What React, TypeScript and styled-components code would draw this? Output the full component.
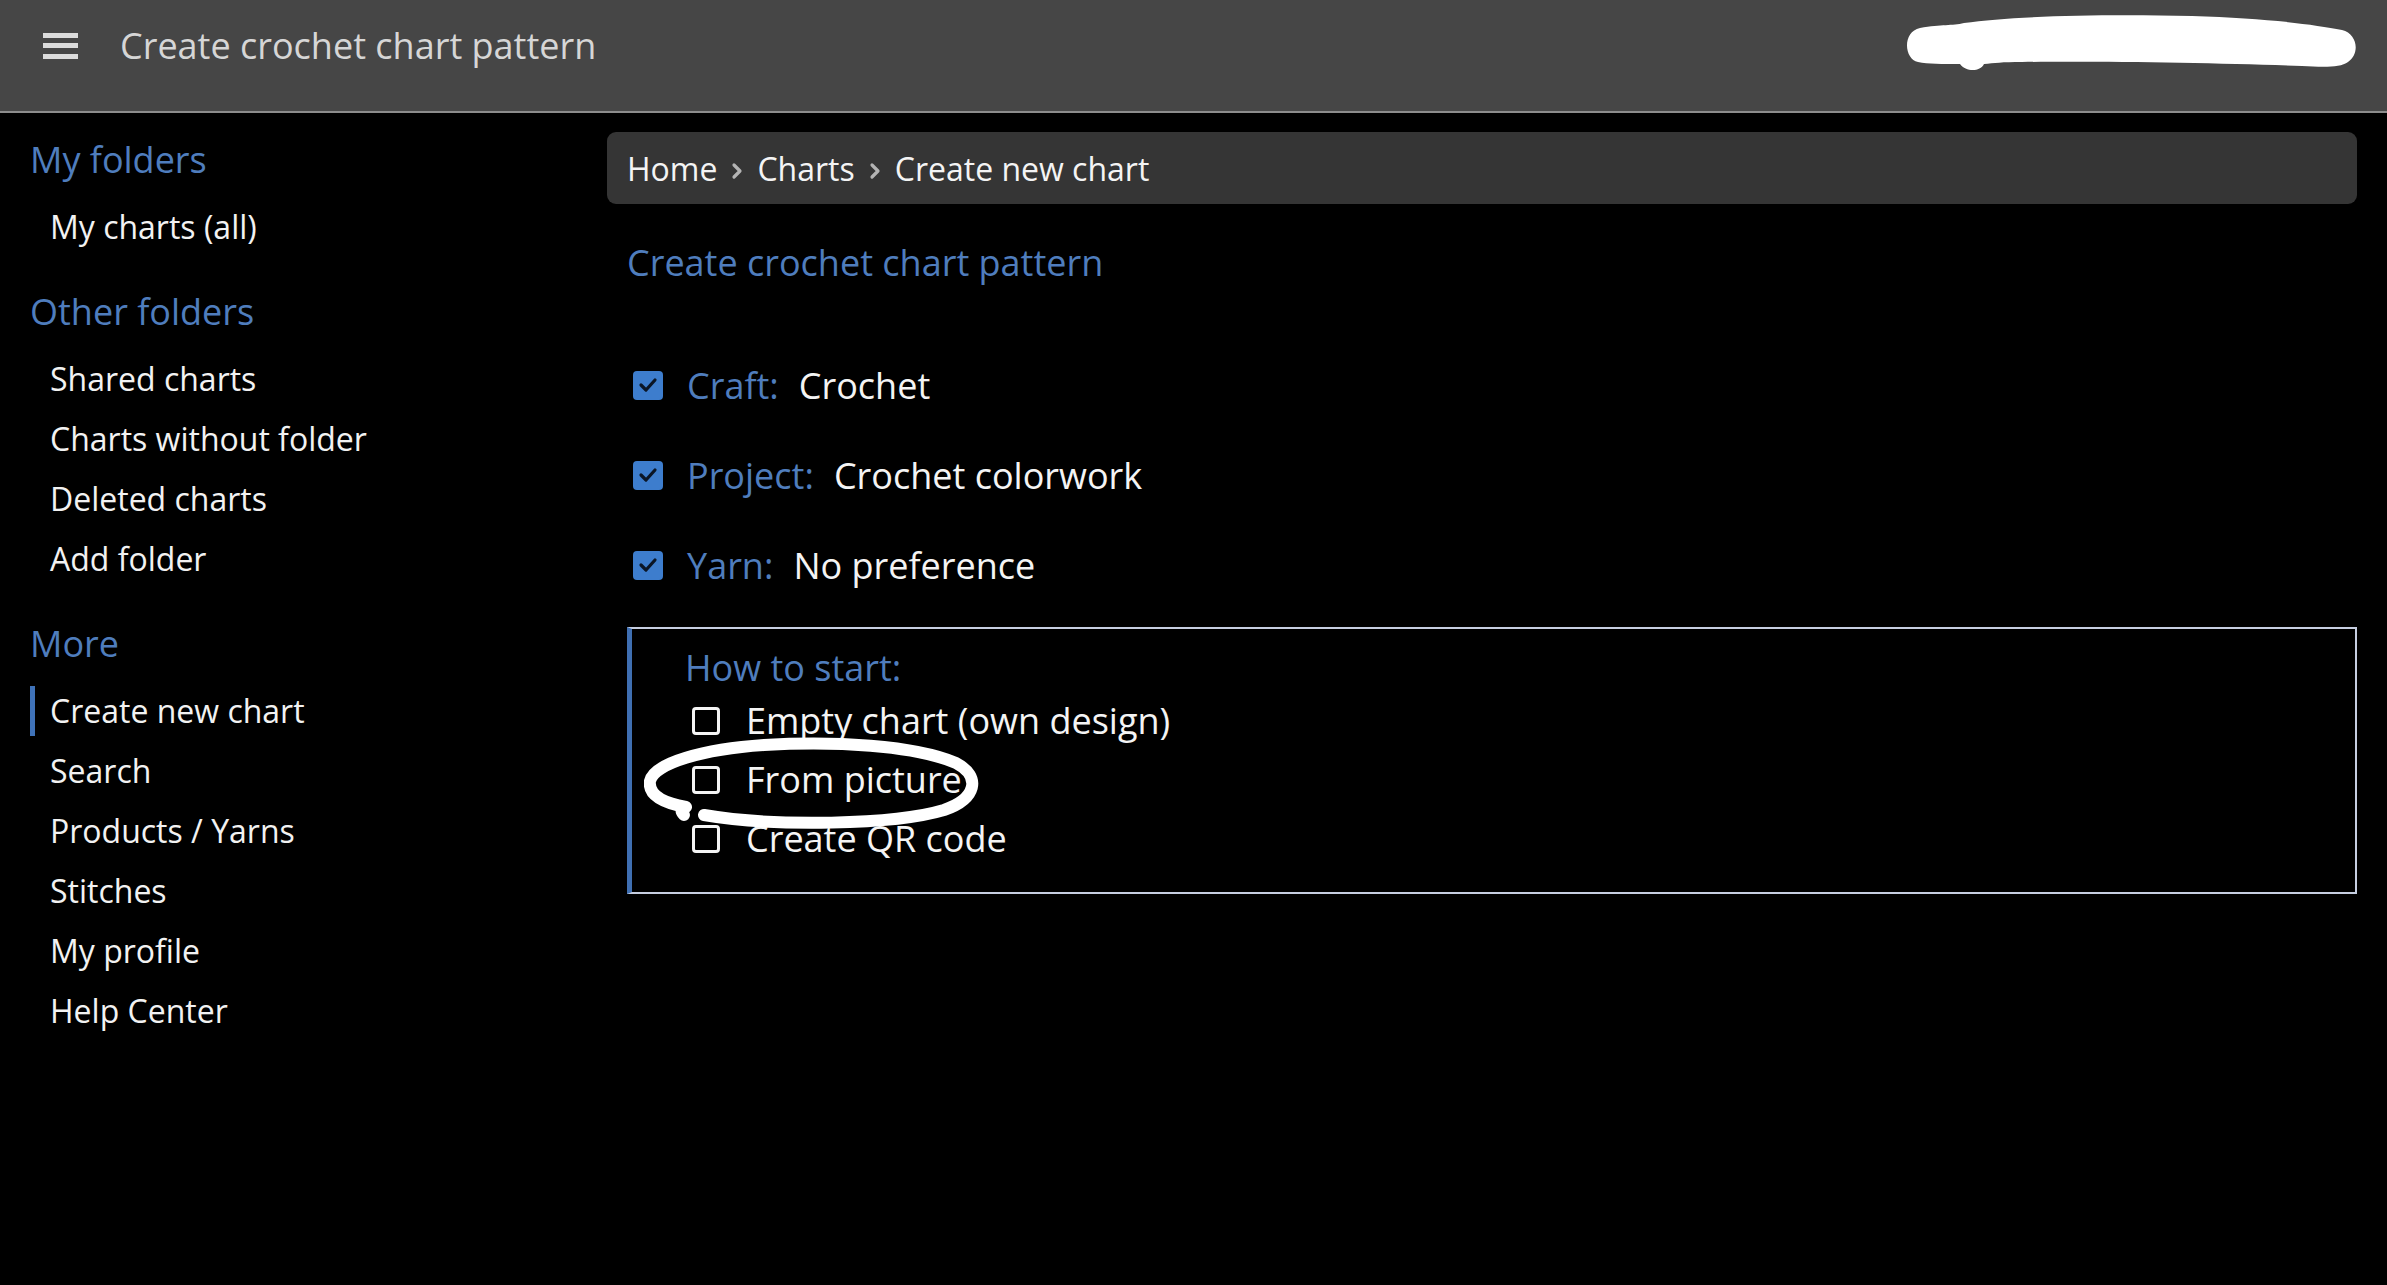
import React from "react";
import styled, { createGlobalStyle } from "styled-components";

const GlobalStyle = createGlobalStyle`
  html, body {
    margin: 0;
    padding: 0;
    background: #000;
  }
  body {
    font-family: "Open Sans", "Noto Sans", "Liberation Sans", sans-serif;
    color: #f2f2f2;
  }
  * { box-sizing: border-box; }
`;

const Page = styled.div`
  min-height: 1285px;
  background: #000;
  display: flex;
  flex-direction: column;
`;

const TopBar = styled.header`
  height: 113px;
  background: #464646;
  border-bottom: 2px solid #8c8c8c;
  display: flex;
  align-items: center;
  padding: 0 27px 0 43px;
  gap: 42px;
`;

const Burger = styled.div`
  width: 35px;
  height: 26px;
  display: flex;
  flex-direction: column;
  justify-content: space-between;
  margin-top: -20px;
`;

const BurgerBar = styled.span`
  display: block;
  height: 5px;
  background: #dcdcdc;
`;

const TopTitle = styled.h1`
  margin: -20px 0 0 0;
  font-size: 36px;
  font-weight: 400;
  line-height: 50px;
  color: #d6d6d6;
`;

const Redaction = styled.svg`
  margin-left: auto;
  align-self: flex-start;
  margin-top: 14px;
  width: 458px;
  height: 60px;
`;

const Body = styled.div`
  display: flex;
  flex: 1;
`;

const Sidebar = styled.nav`
  width: 607px;
  flex-shrink: 0;
  padding: 23px 0 0 30px;
  display: flex;
  flex-direction: column;
`;

const SideHeading = styled.h2<{ $first?: boolean }>`
  margin: ${(p) => (p.$first ? "0" : "36px")} 0 18px 0;
  font-size: 36px;
  font-weight: 400;
  line-height: 48px;
  color: #4f7dbd;
`;

const SideList = styled.div`
  display: flex;
  flex-direction: column;
  gap: 10px;
`;

const SideItem = styled.a<{ $active?: boolean }>`
  display: block;
  height: 50px;
  line-height: 50px;
  font-size: 32px;
  color: #f2f2f2;
  text-decoration: none;
  padding-left: 15px;
  border-left: 5px solid ${(p) => (p.$active ? "#3f72b8" : "transparent")};
`;

const Main = styled.main`
  flex: 1;
  padding: 19px 30px 0 0;
  display: flex;
  flex-direction: column;
`;

const Crumbs = styled.div`
  height: 72px;
  background: #353535;
  border-radius: 9px;
  display: flex;
  align-items: center;
  padding-left: 20px;
  gap: 13px;
  font-size: 32px;
  color: #f4f4f4;
`;

const Chevron = styled.svg`
  width: 14px;
  height: 20px;
  margin-top: 5px;
`;

const PageTitle = styled.h2`
  margin: 34px 0 0 20px;
  font-size: 36px;
  font-weight: 400;
  line-height: 50px;
  color: #4f7dbd;
`;

const Rows = styled.div`
  margin: 67px 0 0 26px;
  display: flex;
  flex-direction: column;
  gap: 30px;
`;

const Row = styled.div`
  height: 60px;
  display: flex;
  align-items: center;
  font-size: 36px;
`;

const CheckedBox = styled.span`
  width: 30px;
  height: 29px;
  border-radius: 4px;
  background: #3d7dcd;
  display: flex;
  align-items: center;
  justify-content: center;
  margin-right: 24px;
`;

const Label = styled.span`
  color: #4f7dbd;
  margin-right: 20px;
`;

const Value = styled.span`
  color: #f4f4f4;
`;

const StartBox = styled.section`
  position: relative;
  margin: 32px 0 0 20px;
  border: 2px solid #c6cee0;
  border-left: 5px solid #3f6fb2;
  padding: 16px 0 24px 53px;
  display: flex;
  flex-direction: column;
`;

const StartHeading = styled.div`
  font-size: 36px;
  line-height: 46px;
  color: #4f7dbd;
`;

const Option = styled.label`
  height: 59px;
  display: flex;
  align-items: center;
  font-size: 36px;
  color: #f4f4f4;
  padding-left: 7px;
`;

const EmptyBox = styled.span`
  width: 28px;
  height: 28px;
  border: 3px solid #f4f4f4;
  border-radius: 4px;
  margin-right: 26px;
  flex-shrink: 0;
`;

const Scribble = styled.svg`
  position: absolute;
  left: 12px;
  top: 106px;
  width: 340px;
  height: 96px;
  pointer-events: none;
`;

const sideGroups: { title: string; items: string[] }[] = [
  { title: "My folders", items: ["My charts (all)"] },
  {
    title: "Other folders",
    items: ["Shared charts", "Charts without folder", "Deleted charts", "Add folder"],
  },
  {
    title: "More",
    items: ["Create new chart", "Search", "Products / Yarns", "Stitches", "My profile", "Help Center"],
  },
];

const ChevronIcon = () => (
  <Chevron viewBox="0 0 14 20">
    <path d="M4 4 L10 10 L4 16" fill="none" stroke="#b4b4b4" strokeWidth="3.2" strokeLinecap="round" strokeLinejoin="round" />
  </Chevron>
);

const Check = () => (
  <svg width="20" height="16" viewBox="0 0 20 16">
    <path d="M3 8 L8 13 L17 3" fill="none" stroke="#0b1626" strokeWidth="3.2" strokeLinecap="round" strokeLinejoin="round" />
  </svg>
);

const rows = [
  { label: "Craft:", value: "Crochet" },
  { label: "Project:", value: "Crochet colorwork" },
  { label: "Yarn:", value: "No preference" },
];

export default function App() {
  return (
    <>
      <GlobalStyle />
      <Page>
        <TopBar>
          <Burger>
            <BurgerBar />
            <BurgerBar />
            <BurgerBar />
          </Burger>
          <TopTitle>Create crochet chart pattern</TopTitle>
          <Redaction viewBox="0 0 458 60">
            <path
              d="M18 14 C40 10 50 12 62 9 C110 2 200 0 290 2 C360 4 410 10 440 16 C456 20 458 40 446 48 C438 54 420 53 400 52 C320 49 200 47 120 48 C100 48 92 49 82 50 C78 58 64 58 58 50 C40 50 26 50 16 48 C2 45 0 18 18 14 Z"
              fill="#ffffff"
            />
          </Redaction>
        </TopBar>
        <Body>
          <Sidebar>
            {sideGroups.map((g, gi) => (
              <React.Fragment key={g.title}>
                <SideHeading $first={gi === 0}>{g.title}</SideHeading>
                <SideList>
                  {g.items.map((it) => (
                    <SideItem key={it} $active={it === "Create new chart"}>
                      {it}
                    </SideItem>
                  ))}
                </SideList>
              </React.Fragment>
            ))}
          </Sidebar>
          <Main>
            <Crumbs>
              <span>Home</span>
              <ChevronIcon />
              <span>Charts</span>
              <ChevronIcon />
              <span>Create new chart</span>
            </Crumbs>
            <PageTitle>Create crochet chart pattern</PageTitle>
            <Rows>
              {rows.map((r) => (
                <Row key={r.label}>
                  <CheckedBox>
                    <Check />
                  </CheckedBox>
                  <Label>{r.label}</Label>
                  <Value>{r.value}</Value>
                </Row>
              ))}
            </Rows>
            <StartBox>
              <StartHeading>How to start:</StartHeading>
              <Option>
                <EmptyBox />
                Empty chart (own design)
              </Option>
              <Option>
                <EmptyBox />
                From picture
              </Option>
              <Option>
                <EmptyBox />
                Create QR code
              </Option>
              <Scribble viewBox="0 0 340 96">
                <path
                  d="M40 80 C36 76 37 71 42 72 C20 68 4 60 6 46 C10 28 60 14 120 10 C190 6 270 10 312 28 C338 42 332 64 300 75 C250 90 130 92 60 80"
                  fill="none"
                  stroke="#ffffff"
                  strokeWidth="12"
                  strokeLinecap="round"
                  strokeLinejoin="round"
                />
              </Scribble>
            </StartBox>
          </Main>
        </Body>
      </Page>
    </>
  );
}
